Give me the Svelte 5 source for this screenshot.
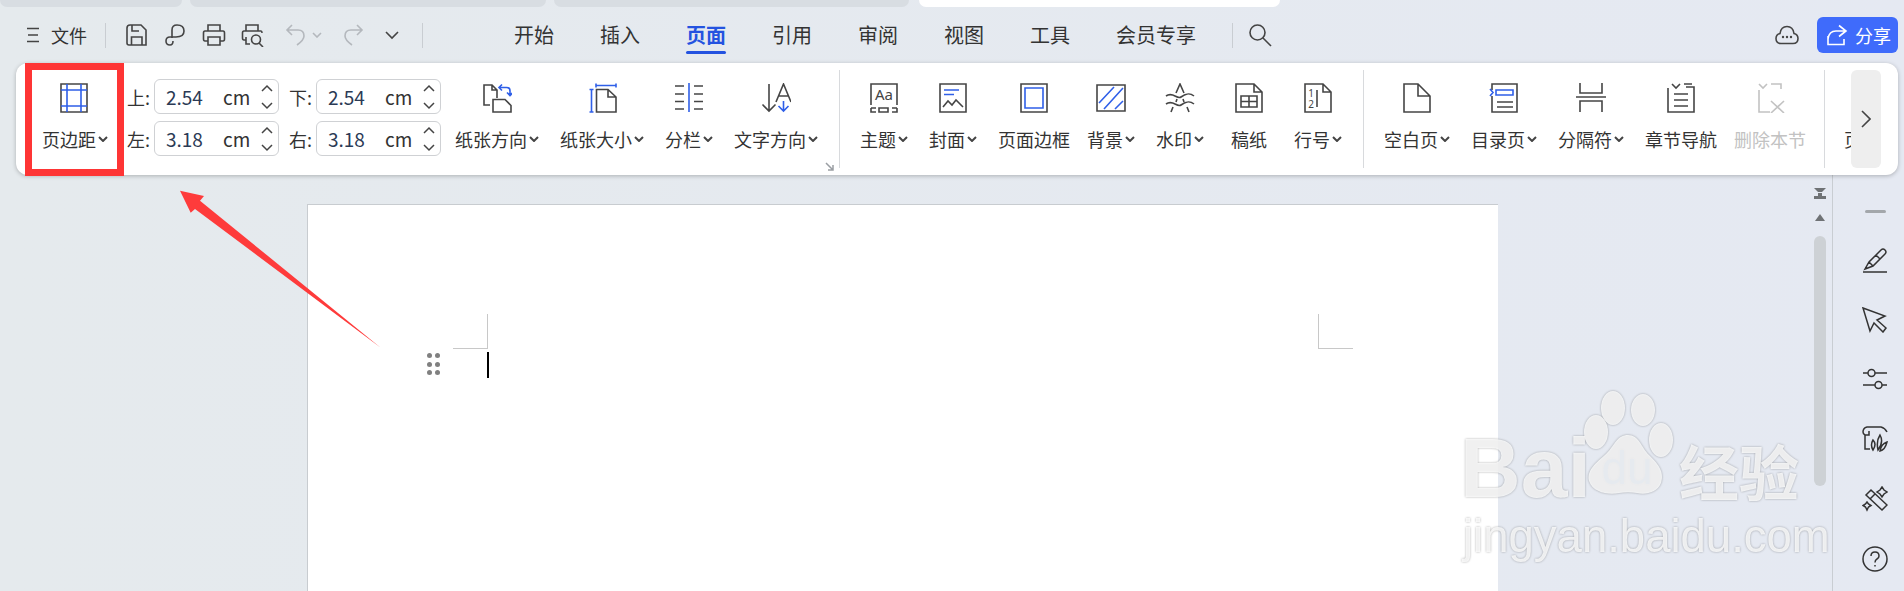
<script lang="ts">
  // d: dark strokes, b: blue strokes, t: letters inside the icon
  const icons = {
    margin: {
      d: 'M1 1H27V29H1Z',
      b: 'M7 1V29M21 1V29M1 7H27M1 23H27'
    },
    orient: {
      d: 'M8 22H2V2H10L15 7V15M15 7H10V2M11 16.5H23L29 22.5V29H11Z',
      b: 'M20 1.5L17 4.5L20 7.5M17 4.5H24.5Q28 4.5 28 8V12M25 9.5L28 12.5L31 9.5'
    },
    size: {
      d: 'M9.5 6.5H21L29 14V29H9.5ZM21 6.5V14H29',
      b: 'M4.5 6.5V29M2.5 6.5H6.5M2.5 29H6.5M9 2.5H29M9 .5V4.5M29 .5V4.5'
    },
    columns: {
      d: 'M1 3H10M1 11H10M1 18.5H10M1 26H10M20 3H29M20 11H29M20 18.5H29M20 26H29',
      b: 'M15 0V29'
    },
    textdir: {
      d: 'M8 1V28M1.5 21.5L8 28L14.5 21.5M15 19L22.5 1L30 19M17.5 13H27.5',
      b: 'M22.5 18V27.5M17.5 23L22.5 28L27.5 23'
    },
    theme: {
      d: 'M2 22V1H28V22M2 25V29H7M2 25H7M10 25H19V29H10ZM28 25V29H23M28 25H23',
      t: [{ x: 15, y: 17, s: 15, v: 'Aa' }]
    },
    cover: {
      d: 'M2 1H28V29H2ZM5 24L10 18L14 22L18 17L25 24',
      b: 'M6 7H21M6 11.5H16'
    },
    border: {
      d: 'M2 1H28V29H2Z',
      b: 'M6 5H24V25H6Z'
    },
    background: {
      d: 'M1 2H29V28H1Z',
      b: 'M3 20L18 4M8 26L27 5M19 26L27 18'
    },
    watermark: {
      d: 'M11 10L15 1L19 10M1 13C8 8 12 17 16 14S24 9 29 13M1 21C8 16 12 25 16 22S24 17 29 21M6 29L8 24M22 24L24 29M11 19L12 16M18 16L19 19'
    },
    grid: {
      d: 'M2 1H20L28 9V29H2ZM20 1V9H28M7 13H23V24H7ZM7 18.5H23M15 13V24'
    },
    lineno: {
      d: 'M2 1H20L28 9V29H2ZM20 1V9H28M14 7V24',
      t: [
        { x: 8, y: 14, s: 10, v: '1' },
        { x: 8, y: 25, s: 10, v: '2' }
      ]
    },
    blank: { d: 'M2 1H16L28 13V29H2ZM16 1V13H28' },
    toc: {
      d: 'M3 7V1H28V29H3V13M8 19H24M8 24H24',
      b: 'M1 6L4 9.5L1 13M7 7H24V12H7Z'
    },
    pagebreak: { d: 'M4 0V10H26V0M0 14H30M4 29V18H26V29' },
    chapter: {
      d: 'M2 5V29H28V4H20M6 1L10 5L14 1M18 1H26M8 11H22M8 17H22M8 23H22'
    },
    removesec: {
      d: 'M4 1L8 5L12 1M16 1H26V6M4 7V29H15M16 18L29 30M29 18L16 30'
    }
  }

  const pageSetup = [
    { label: '纸张方向', icon: 'orient', arrow: true },
    { label: '纸张大小', icon: 'size', arrow: true },
    { label: '分栏', icon: 'columns', arrow: true },
    { label: '文字方向', icon: 'textdir', arrow: true }
  ]
  const decorate = [
    { label: '主题', icon: 'theme', arrow: true },
    { label: '封面', icon: 'cover', arrow: true },
    { label: '页面边框', icon: 'border', tight: true },
    { label: '背景', icon: 'background', arrow: true },
    { label: '水印', icon: 'watermark', arrow: true },
    { label: '稿纸', icon: 'grid' },
    { label: '行号', icon: 'lineno', arrow: true }
  ]
  const pages = [
    { label: '空白页', icon: 'blank', arrow: true },
    { label: '目录页', icon: 'toc', arrow: true },
    { label: '分隔符', icon: 'pagebreak', arrow: true },
    { label: '章节导航', icon: 'chapter', tight: true },
    { label: '删除本节', icon: 'removesec', off: true }
  ]

  const spins = [
    { label: '上:', value: '2.54' },
    { label: '下:', value: '2.54' },
    { label: '左:', value: '3.18' },
    { label: '右:', value: '3.18' }
  ]

  const tabs = ['开始', '插入', '页面', '引用', '审阅', '视图', '工具', '会员专享']
</script>

{#snippet ribbonIcon(name)}
  <svg class="ricon" viewBox="0 0 30 30" width="30" height="30">
    {#if icons[name].d}<path class="dk" d={icons[name].d} />{/if}
    {#if icons[name].b}<path class="bl" d={icons[name].b} />{/if}
    {#each icons[name].t ?? [] as t}
      <text class="ilabel" x={t.x} y={t.y} font-size={t.s}>{t.v}</text>
    {/each}
  </svg>
{/snippet}

{#snippet item(it)}
  <div class="item" class:off={it.off} class:tight={it.tight}>
    {@render ribbonIcon(it.icon)}
    <div class="item-label">
      {it.label}{#if it.arrow}<svg class="caret" viewBox="0 0 10 6" width="10" height="6"><path d="M1 1L5 5L9 1" /></svg>{/if}
    </div>
  </div>
{/snippet}

<div class="app">
  <div class="tabstrip">
    <div class="doc-tab w1"></div>
    <div class="doc-tab w2"></div>
    <div class="doc-tab w3"></div>
    <div class="doc-tab active"></div>
  </div>

  <header class="titlebar">
    <div class="menu-btn">
      <svg viewBox="0 0 12 16" width="12" height="16"><path d="M0 1.5H12M1 8H11M0 14.5H12" /></svg>
      <span>文件</span>
    </div>
    <span class="vsep"></span>
    <div class="quick">
      <svg viewBox="0 0 24 24" width="24" height="24"><path d="M3 5Q3 2 6 2H17L22 7V22H5Q3 22 3 20ZM8 2V8H15M7.500 22V14H18V22" /></svg>
      <svg viewBox="0 0 24 24" width="24" height="24"><path d="M9 15V7Q9 2 14 2Q21 2 21 8Q21 14 13 14H7Q3 14 3 18Q3 22 7 22Q10 22 10 18" /></svg>
      <svg viewBox="0 0 24 24" width="24" height="24"><path d="M6 8V2H18V8M6 18H3Q1.500 18 1.500 16V10Q1.500 8 3 8H21Q22.500 8 22.500 10V16Q22.500 18 21 18H18M6 14H18V22H6Z" /></svg>
      <svg viewBox="0 0 24 24" width="24" height="24"><path d="M5 8V2H17V8M5 17H3Q1.500 17 1.500 15V10Q1.500 8 3 8H20Q21 8 21 10M5 14V21H9M19.500 16.500A4.500 4.500 0 1 1 10.500 16.500A4.500 4.500 0 1 1 19.500 16.500M18 20L22 24" /></svg>
      <svg class="dim undo" viewBox="0 0 24 24" width="24" height="24"><path d="M8 2L3 7L8 12M3 7H14Q20 7 20 13Q20 17 13 22" /></svg>
      <svg class="dim tiny" viewBox="0 0 10 6" width="10" height="6"><path d="M1 1L5 5L9 1" /></svg>
      <svg class="dim after-tiny" viewBox="0 0 24 24" width="24" height="24"><path d="M16 2L21 7L16 12M21 7H10Q4 7 4 13Q4 17 11 22" /></svg>
      <svg viewBox="0 0 24 24" width="24" height="24"><path d="M6 9L12 15L18 9" /></svg>
    </div>
    <span class="vsep"></span>

    <nav class="tabs">
      {#each tabs as tab}
        <span class="tab" class:current={tab === '页面'}>{tab}</span>
      {/each}
    </nav>
    <span class="vsep close"></span>
    <svg class="search" viewBox="0 0 24 24" width="24" height="24"><path d="M17 9.500A7.500 7.500 0 1 1 2 9.500A7.500 7.500 0 1 1 17 9.500M15 15L23 23" /></svg>

    <div class="title-right">
      <svg class="cloud" viewBox="0 0 24 20" width="24" height="20">
        <path d="M6 18.500Q1 18.500 1 13.500Q1 9.500 5 8.500Q6 1.500 12 1.500Q18 1.500 19 8.500Q23 9.500 23 13.500Q23 18.500 18 18.500Z" />
        <circle cx="8" cy="12" r="1.200" /><circle cx="12" cy="12" r="1.200" /><circle cx="16" cy="12" r="1.200" />
      </svg>
      <button class="share">
        <svg viewBox="0 0 22 22" width="22" height="22"><path d="M13 1.500L20 7L13 12.500M20 7H10Q3 7 2 15M2 12V20.500H18V15" /></svg>
        分享
      </button>
    </div>
  </header>

  <section class="ribbon">
    <div class="ribbon-scroll">
      <div class="group first">
        <div class="item margin-item">
          {@render ribbonIcon('margin')}
          <div class="item-label">页边距<svg class="caret" viewBox="0 0 10 6" width="10" height="6"><path d="M1 1L5 5L9 1" /></svg></div>
        </div>

        <div class="spin-grid">
          {#each spins as s}
            <label class="spin-row">
              <span class="spin-label">{s.label}</span>
              <span class="spin">
                <span class="spin-value">{s.value}</span>
                <span class="spin-unit">cm</span>
                <svg class="spin-arrows" viewBox="0 0 12 26" width="12" height="26"><path d="M1 7L6 2L11 7M1 19L6 24L11 19" /></svg>
              </span>
            </label>
          {/each}
        </div>

        <div class="group setup">
          {#each pageSetup as it}{@render item(it)}{/each}
          <svg class="launcher" viewBox="0 0 9 9" width="9" height="9"><path d="M1 1L8 8M8 3V8H3" /></svg>
        </div>
      </div>

      <span class="rsep"></span>
      <div class="group">
        {#each decorate as it}{@render item(it)}{/each}
      </div>
      <span class="rsep"></span>
      <div class="group">
        {#each pages as it}{@render item(it)}{/each}
      </div>
      <span class="rsep last"></span>
      <div class="item clipped">
        <div class="item-label">页码</div>
      </div>
    </div>

    <div class="more">
      <svg viewBox="0 0 10 18" width="10" height="18"><path d="M1 1L9 9L1 17" /></svg>
    </div>
  </section>

  <div class="work">
    <main class="canvas">
      <div class="page">
        <div class="crop-marks">
          <span class="mark left"></span>
          <span class="mark right"></span>
        </div>
        <div class="first-line">
          <div class="grip">
            {#each Array(6) as _}<i></i>{/each}
          </div>
          <span class="caret-bar"></span>
        </div>
      </div>
    </main>

    <div class="vscroll">
      <svg class="ruler-btn" viewBox="0 0 12 12" width="12" height="12"><path d="M0 0H12L8 4H4ZM4 5H8V8H12V11H0V8H4Z" /></svg>
      <svg class="up-btn" viewBox="0 0 10 7" width="10" height="7"><path d="M5 0L10 7H0Z" /></svg>
      <div class="thumb"></div>
    </div>

    <aside class="side">
      <span class="dash"></span>
      <svg viewBox="0 0 26 26" width="26" height="26"><path d="M1 25H25M3 22L7 15L19 3Q21 1 23 3Q25 5 23 7L11 19ZM7 15L11 19M14 8L18 12" /></svg>
      <svg viewBox="0 0 26 26" width="26" height="26"><path d="M1 1L23 9L15 13L24 21L21 25L12 16L8 24Z" /></svg>
      <svg viewBox="0 0 26 26" width="26" height="26"><path d="M1 7H6M13 7H25M1 19H13M20 19H25M6 7A3.500 3.500 0 1 1 13 7A3.500 3.500 0 1 1 6 7M13 19A3.500 3.500 0 1 1 20 19A3.500 3.500 0 1 1 13 19" /></svg>
      <svg viewBox="0 0 26 26" width="26" height="26"><path d="M8 23H3V9Q1 8 1 6Q1 2 5 1H19Q23 2 25 6M3 9H7V5M11 24Q8 19 11 14Q15 18 11 24ZM16 24Q14 15 18 9Q22 16 16 24ZM18 25Q23 24 25 16Q19 18 18 25Z" /></svg>
      <svg viewBox="0 0 26 26" width="26" height="26"><path d="M9 4L25 19L20 24L4 9ZM13 8L8 13M20 1L22 4L25 6L22 8L20 11L18 8L15 6L18 4ZM5 16L6.500 18L9 19.500L6.500 21L5 24L3.500 21L1 19.500L3.500 18Z" /></svg>
      <svg viewBox="0 0 26 26" width="26" height="26"><path d="M25 13A12 12 0 1 1 1 13A12 12 0 1 1 25 13M9 10Q9 6 13 6Q17 6 17 10Q17 12 15 13Q13 14 13 16.500M13 19V20.500" /></svg>
    </aside>
  </div>

  <div class="highlight"></div>

  <svg class="arrow" viewBox="0 0 220 170" width="220" height="170">
    <path d="M10 10.700L34 16L30 20.700L210.700 167.700L25 29L20.700 32.700Z" />
  </svg>

  <div class="watermark">
    <span class="wm-bai">Bai</span>
    <svg class="wm-paw" viewBox="0 0 90 104" width="90" height="104">
      <ellipse cx="30" cy="17" rx="12" ry="17" />
      <ellipse cx="60" cy="19" rx="12" ry="16" />
      <ellipse cx="7" cy="41" rx="12" ry="17" transform="translate(6 0)" />
      <ellipse cx="78" cy="49" rx="12" ry="17" />
      <path d="M45 44C56 44 58 56 66 64C74 72 82 80 78 92C74 102 62 104 54 102C48 101 42 101 36 102C26 104 10 102 6 90C3 78 16 70 24 62C32 54 34 44 45 44Z" />
      <text x="44" y="93" font-size="46">du</text>
    </svg>
    <span class="wm-cn">经验</span>
    <span class="wm-url">jingyan.baidu.com</span>
  </div>
</div>

<style>
  :global(body) {
    margin: 0;
  }

  .app {
    position: relative;
    display: flex;
    flex-direction: column;
    height: 591px;
    overflow: hidden;
    background: linear-gradient(90deg, #e5eaed, #e5e9f2);
    font-family: 'Noto Sans CJK SC', 'Noto Sans', sans-serif;
    color: #333;
  }

  /* document tabs, only their bottom edge is in view */
  .tabstrip {
    display: flex;
    gap: 8px;
    height: 7px;
    flex: none;
  }
  .doc-tab {
    background: #d8dde2;
    border-radius: 0 0 9px 9px;
  }
  .w1 { width: 182px; }
  .w2 { width: 356px; }
  .w3 { width: 355px; }
  .active {
    width: 361px;
    margin-left: 2px;
    background: #fff;
  }

  .titlebar {
    display: flex;
    align-items: center;
    height: 56px;
    flex: none;
    padding: 0 6px 0 27px;
  }
  .titlebar svg path {
    fill: none;
    stroke: #444;
    stroke-width: 1.6;
  }
  .menu-btn {
    display: flex;
    align-items: center;
    gap: 12px;
    font-size: 18px;
    line-height: 24px;
  }
  .vsep {
    width: 1px;
    height: 25px;
    margin: 0 18px;
    background: #c9cdd2;
  }
  .vsep.close {
    margin: 0 15px 0 36px;
  }
  .quick {
    display: flex;
    align-items: center;
    gap: 15px;
  }
  .quick .dim path {
    stroke: #b4b8bd;
  }
  .quick .undo {
    margin-left: 4px;
  }
  .quick .tiny {
    margin-left: -11px;
  }
  .quick .after-tiny {
    margin-left: 4px;
  }
  .tabs {
    display: flex;
    gap: 46px;
    margin-left: 73px;
    font-size: 20px;
    line-height: 28px;
  }
  .tab {
    position: relative;
    white-space: nowrap;
  }
  .tab.current {
    color: #2453e0;
    font-weight: 700;
  }
  .tab.current::after {
    content: '';
    position: absolute;
    left: 0;
    right: 0;
    bottom: -5px;
    height: 3px;
    border-radius: 2px;
    background: #2453e0;
  }
  .title-right {
    display: flex;
    align-items: center;
    gap: 18px;
    margin-left: auto;
  }
  .cloud circle {
    fill: #444;
  }
  .share {
    display: flex;
    align-items: center;
    justify-content: center;
    gap: 7px;
    width: 81px;
    height: 36px;
    padding: 0 0 0 2px;
    border: 0;
    border-radius: 6px;
    background: #3f6bfb;
    color: #fff;
    font: inherit;
    font-size: 18px;
  }
  .titlebar .share svg path {
    stroke: #fff;
  }

  .ribbon {
    position: relative;
    display: flex;
    flex: none;
    height: 112px;
    margin: 0 6px 0 16px;
    background: #fff;
    border-radius: 12px;
    box-shadow: 0 1px 4px rgba(0, 0, 0, 0.25);
  }
  .ribbon-scroll {
    display: flex;
    flex: 1;
    min-width: 0;
    margin-right: 47px;
    overflow: hidden;
    padding-left: 27px;
  }
  .group {
    display: flex;
    gap: 21px;
    flex: none;
  }
  .group.first {
    gap: 18px;
  }
  .group.setup {
    position: relative;
    margin-left: -4px;
  }
  .launcher {
    position: absolute;
    right: -16px;
    bottom: 4px;
  }
  .launcher path {
    fill: none;
    stroke: #9a9ea3;
    stroke-width: 1.5;
  }
  .rsep {
    flex: none;
    width: 1px;
    margin: 7px 20px 7px 21px;
    background: #d8dadd;
  }
  .rsep.last {
    margin-left: 18px;
    margin-right: 19px;
  }
  .item {
    display: flex;
    flex-direction: column;
    align-items: center;
    flex: none;
    min-width: 48px;
    padding-top: 20px;
  }
  .item.tight {
    margin-right: -4px;
  }
  .margin-item {
    margin-left: -1px;
  }
  .ricon {
    display: block;
  }
  .dk,
  .bl {
    fill: none;
    stroke-width: 1.6;
  }
  .dk {
    stroke: #454545;
  }
  .bl {
    stroke: #2f5fe8;
  }
  .ilabel {
    fill: #454545;
    font-family: 'Noto Sans', sans-serif;
    text-anchor: middle;
  }
  .item-label {
    display: flex;
    align-items: center;
    gap: 2px;
    margin-top: 14px;
    font-size: 18px;
    line-height: 24px;
    white-space: nowrap;
  }
  .caret path {
    fill: none;
    stroke: #444;
    stroke-width: 2;
  }
  .off {
    color: #c2c2c2;
  }
  .off .dk {
    stroke: #c2c2c2;
  }
  .clipped {
    width: 60px;
    align-items: flex-start;
    padding-top: 50px;
  }

  .spin-grid {
    display: grid;
    grid-template-columns: auto auto;
    gap: 7px 10px;
    align-self: flex-start;
    margin-top: 16px;
    margin-left: 1px;
  }
  .spin-row {
    display: flex;
    align-items: center;
    gap: 5px;
    font-size: 18px;
  }
  .spin-label {
    width: 22px;
    white-space: nowrap;
  }
  .spin {
    box-sizing: border-box;
    display: flex;
    align-items: center;
    width: 125px;
    height: 35px;
    padding: 0 0 0 11px;
    border: 1px solid #cfd1d4;
    border-radius: 6px;
    font-size: 19px;
  }
  .spin-value {
    width: 57px;
    color: #2b3a55;
  }
  .spin-unit {
    width: 38px;
  }
  .spin-arrows path {
    fill: none;
    stroke: #444;
    stroke-width: 1.5;
  }

  .more {
    position: absolute;
    top: 7px;
    right: 17px;
    bottom: 7px;
    width: 30px;
    display: flex;
    align-items: center;
    justify-content: center;
    border-radius: 6px;
    background: #eeeeee;
  }
  .more path {
    fill: none;
    stroke: #444;
    stroke-width: 1.6;
  }

  .work {
    display: flex;
    flex: 1;
    min-height: 0;
  }
  .canvas {
    display: flex;
    flex: 1;
    justify-content: center;
    min-width: 0;
    padding-top: 29px;
  }
  .page {
    box-sizing: border-box;
    width: 1191px;
    height: 500px;
    flex: none;
    padding: 109px 145px 0 145px;
    border-top: 1px solid #c8ccd0;
    border-left: 1px solid #c8ccd0;
    background: #fff;
  }
  .crop-marks {
    display: flex;
    justify-content: space-between;
    height: 35px;
  }
  .mark {
    box-sizing: border-box;
    width: 35px;
    height: 35px;
    border-bottom: 1px solid #c8c8c8;
  }
  .mark.left {
    border-right: 1px solid #c8c8c8;
  }
  .mark.right {
    border-left: 1px solid #c8c8c8;
  }
  .first-line {
    display: flex;
    align-items: flex-start;
    gap: 47px;
    margin: 3px 0 0 -26px;
  }
  .grip {
    display: grid;
    grid-template-columns: 5px 5px;
    gap: 3.5px 3px;
    width: 13px;
    margin-top: 1px;
  }
  .grip i {
    width: 5px;
    height: 5px;
    border-radius: 50%;
    background: #808080;
  }
  .caret-bar {
    width: 2px;
    height: 26px;
    background: #000;
  }

  .vscroll {
    display: flex;
    flex-direction: column;
    align-items: center;
    flex: none;
    width: 12px;
    padding: 13px 6px 0 9px;
    border-right: 1px solid #c9cdd2;
  }
  .ruler-btn path,
  .up-btn path {
    fill: #6f7275;
  }
  .up-btn {
    margin-top: 14px;
  }
  .thumb {
    width: 12px;
    height: 250px;
    margin-top: 15px;
    border-radius: 6px;
    background: #cdd1d5;
  }

  .side {
    box-sizing: border-box;
    display: flex;
    flex-direction: column;
    align-items: center;
    gap: 33.8px;
    width: 71px;
    flex: none;
    padding: 35px 0 0 13px;
  }
  .side svg path {
    fill: none;
    stroke: #333;
    stroke-width: 1.500;
  }
  .dash {
    width: 21px;
    height: 3px;
    background: #a3a7ab;
    border-radius: 2px;
  }

  /* annotations painted over the screenshot */
  .highlight {
    position: absolute;
    left: 25px;
    top: 63px;
    width: 85px;
    height: 99px;
    border: 7px solid #fe3535;
  }
  .arrow {
    position: absolute;
    left: 170px;
    top: 180px;
  }
  .arrow path {
    fill: #fe3b3b;
  }

  .watermark {
    position: absolute;
    left: 1455px;
    top: 385px;
    width: 360px;
    height: 175px;
    color: rgba(255, 255, 255, 0.8);
    filter: drop-shadow(0 0 1px rgba(0, 0, 0, 0.38));
    pointer-events: none;
  }
  .watermark span {
    position: absolute;
    white-space: nowrap;
  }
  .wm-bai {
    left: 5px;
    top: 33px;
    font: 700 84px/100px 'Liberation Sans', sans-serif;
  }
  .wm-paw {
    position: absolute;
    left: 128px;
    top: 6px;
    fill: rgba(255, 255, 255, 0.8);
  }
  .wm-paw text {
    fill: #e6eaef;
    font-family: 'Liberation Sans', sans-serif;
    text-anchor: middle;
  }
  .wm-cn {
    left: 224px;
    top: 47px;
    font: 700 60px/76px 'Noto Sans CJK SC', sans-serif;
  }
  .wm-url {
    left: 8px;
    top: 122px;
    font: 400 45.500px/60px 'Liberation Sans', sans-serif;
  }
</style>
